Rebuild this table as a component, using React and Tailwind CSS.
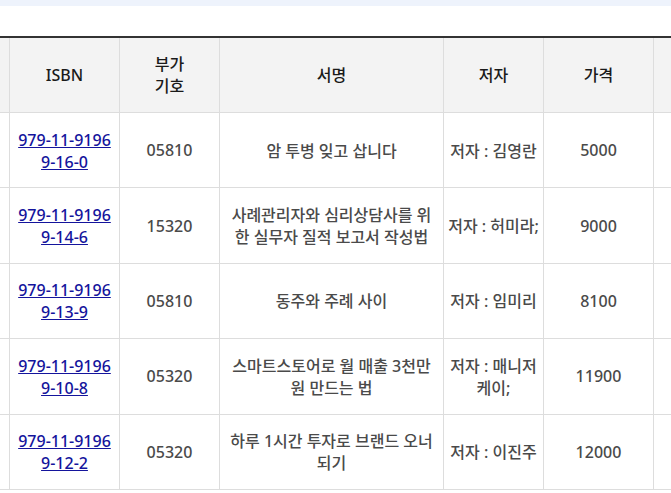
const BOOKS = [
  { isbn: '979-11-91969-16-0', code: '05810', title: '암 투병 잊고 삽니다', author: '저자 : 김영란', price: '5000' },
  { isbn: '979-11-91969-14-6', code: '15320', title: '사례관리자와 심리상담사를 위한 실무자 질적 보고서 작성법', author: '저자 : 허미라;', price: '9000' },
  { isbn: '979-11-91969-13-9', code: '05810', title: '동주와 주례 사이', author: '저자 : 임미리', price: '8100' },
  { isbn: '979-11-91969-10-8', code: '05320', title: '스마트스토어로 월 매출 3천만 원 만드는 법', author: '저자 : 매니저 케이;', price: '11900' },
  { isbn: '979-11-91969-12-2', code: '05320', title: '하루 1시간 투자로 브랜드 오너 되기', author: '저자 : 이진주', price: '12000' },
]

const th = 'border-r border-b border-[#dddddd] bg-[#f3f3f3] text-[#1a1a1a] font-medium text-center align-middle'
const td = 'border-r border-b border-[#dddddd] text-center align-middle text-[#4a4a4a] font-medium'

export default function App() {
  return (
    <div
      className="w-[671px] h-[493px] overflow-hidden bg-white text-[16px] leading-[22px]"
      style={{ fontFamily: '"Noto Sans", "Noto Sans CJK KR", sans-serif' }}
    >
      <div className="h-[6px] bg-[#eef3fc]" />
      <div className="h-[30px]" />
      <table className="table-fixed border-separate border-spacing-0 w-[754px] border-t-2 border-[#333]">
        <colgroup>
          <col className="w-[10px]" />
          <col className="w-[110px]" />
          <col className="w-[100px]" />
          <col className="w-[224px]" />
          <col className="w-[100px]" />
          <col className="w-[110px]" />
          <col className="w-[100px]" />
        </colgroup>
        <thead>
          <tr className="h-[75px]">
            <th className={th} />
            <th className={th}>ISBN</th>
            <th className={th}>부가<br />기호</th>
            <th className={th}>서명</th>
            <th className={th}>저자</th>
            <th className={th}>가격</th>
            <th className={th} />
          </tr>
        </thead>
        <tbody>
          {BOOKS.map((b) => (
            <tr key={b.isbn} className="h-[75.4px]">
              <td className={td} />
              <td className={`${td} px-[5px] pt-[1px] break-all`}>
                <a href="#" className="text-[#14149c] underline">{b.isbn}</a>
              </td>
              <td className={td}>{b.code}</td>
              <td className={`${td} px-[5px] pt-[1px]`}>{b.title}</td>
              <td className={`${td} px-[2px] pt-[1px]`}>{b.author}</td>
              <td className={td}>{b.price}</td>
              <td className={td} />
            </tr>
          ))}
        </tbody>
      </table>
    </div>
  )
}
